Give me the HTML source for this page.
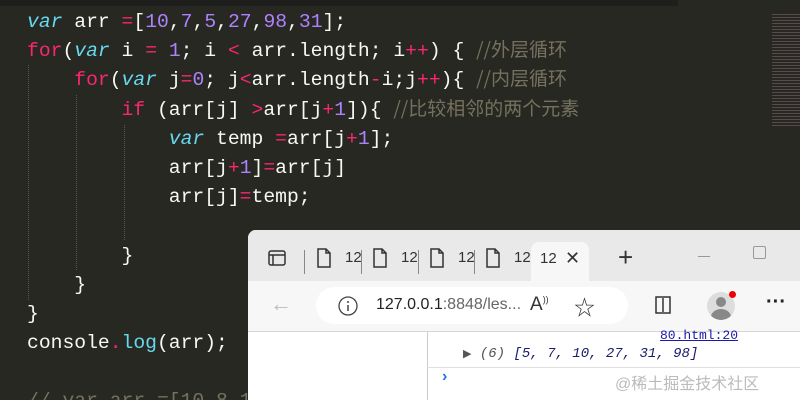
<!DOCTYPE html>
<html style="height:400px;overflow:hidden"><head><style>
body{margin:0;width:800px;height:400px;overflow:hidden;background:#272822;position:relative;font-family:"Liberation Mono","Noto Sans CJK SC",monospace}
.top{position:absolute;left:0;top:0;width:678px;height:6px;background:#1e1f1c}
.code{position:absolute;left:27px;top:8px;font-size:19.7px;color:#f8f8f2;white-space:pre}
.code div{height:29.2px;line-height:29.2px;overflow:visible}
.k{color:#f92672}.v{color:#66d9ef;font-style:italic}.n{color:#ae81ff}.c{color:#75715e;font-family:"Noto Sans CJK SC","Liberation Mono",monospace;font-size:19px;line-height:0}.f{color:#66d9ef}
.g{position:absolute;border-left:1px dotted #555;width:0}
.mini{position:absolute;left:772px;top:12px;width:28px;height:115px;opacity:.5;background:repeating-linear-gradient(#272822 0 2px,#8a6a7a 2px 3px)}
.win{position:absolute;left:248px;top:230px;width:560px;height:170px;background:#fff;border-radius:8px 0 0 0;overflow:hidden;font-family:"Liberation Sans","Noto Sans CJK SC",sans-serif}
.tabs{height:51px;background:#e9e9e9;position:relative}
.tab{position:absolute;top:14px;font-size:15px;color:#333}
.act{position:absolute;left:283px;top:12px;width:58px;height:39px;background:#f7f7f7;border-radius:8px 8px 0 0}
.tb{height:50px;background:#f7f7f7;position:relative;border-bottom:1px solid #d5d5d5}
.url{position:absolute;left:68px;top:6px;width:312px;height:37px;background:#fff;border-radius:19px}
.dev{position:absolute;left:179px;top:102px;width:1px;height:80px;background:#ccc}
</style></head><body>
<div class="top"></div>
<div class="g" style="left:28px;top:65px;height:235px"></div>
<div class="g" style="left:76px;top:95px;height:175px"></div>
<div class="g" style="left:124px;top:125px;height:115px"></div>
<div class="code"><div><span class="v">var</span> arr <span class="k">=</span>[<span class="n">10</span>,<span class="n">7</span>,<span class="n">5</span>,<span class="n">27</span>,<span class="n">98</span>,<span class="n">31</span>];</div><div><span class="k">for</span>(<span class="v">var</span> i <span class="k">=</span> <span class="n">1</span>; i <span class="k">&lt;</span> arr.length; i<span class="k">++</span>) { <span class="c">//外层循环</span></div><div>    <span class="k">for</span>(<span class="v">var</span> j<span class="k">=</span><span class="n">0</span>; j<span class="k">&lt;</span>arr.length<span class="k">-</span>i;j<span class="k">++</span>){ <span class="c">//内层循环</span></div><div>        <span class="k">if</span> (arr[j] <span class="k">&gt;</span>arr[j<span class="k">+</span><span class="n">1</span>]){ <span class="c">//比较相邻的两个元素</span></div><div>            <span class="v">var</span> temp <span class="k">=</span>arr[j<span class="k">+</span><span class="n">1</span>];</div><div>            arr[j<span class="k">+</span><span class="n">1</span>]<span class="k">=</span>arr[j]</div><div>            arr[j]<span class="k">=</span>temp;</div><div> </div><div>        }</div><div>    }</div><div>}</div><div>console<span class="k">.</span><span class="f">log</span>(arr);</div><div> </div><div><span style="color:#75715e">// var arr =[10,8,1</span></div></div>
<div class="mini"></div>
<div class="win">
 <div class="tabs">
  <svg style="position:absolute;left:20px;top:20px" width="18" height="16"><rect x="1" y="1" width="16" height="14" rx="2" fill="none" stroke="#333" stroke-width="1.5"/><line x1="1" y1="5" x2="17" y2="5" stroke="#333" stroke-width="1.5"/><line x1="5" y1="5" x2="5" y2="15" stroke="#333" stroke-width="1.5"/></svg>
  <div style="position:absolute;left:56px;top:20px;width:1px;height:24px;background:#888"></div>
  <svg style="position:absolute;left:68px;top:18px" width="16" height="20"><path d="M2 1h8l4 4v14H2z M10 1v4h4" fill="none" stroke="#333" stroke-width="1.5"/></svg><span class="tab" style="left:97px;top:19px">12</span>
  <div style="position:absolute;left:113px;top:20px;width:1px;height:24px;background:#888"></div>
  <svg style="position:absolute;left:124px;top:18px" width="16" height="20"><path d="M2 1h8l4 4v14H2z M10 1v4h4" fill="none" stroke="#333" stroke-width="1.5"/></svg><span class="tab" style="left:153px;top:19px">12</span>
  <div style="position:absolute;left:170px;top:20px;width:1px;height:24px;background:#888"></div>
  <svg style="position:absolute;left:181px;top:18px" width="16" height="20"><path d="M2 1h8l4 4v14H2z M10 1v4h4" fill="none" stroke="#333" stroke-width="1.5"/></svg><span class="tab" style="left:210px;top:19px">12</span>
  <div style="position:absolute;left:226px;top:20px;width:1px;height:24px;background:#888"></div>
  <svg style="position:absolute;left:237px;top:18px" width="16" height="20"><path d="M2 1h8l4 4v14H2z M10 1v4h4" fill="none" stroke="#333" stroke-width="1.5"/></svg><span class="tab" style="left:266px;top:19px">12</span>
  <div class="act"><span class="tab" style="left:9px;top:8px">12</span><span class="tab" style="left:34px;top:6px;font-size:18px">✕</span></div>
  <span class="tab" style="left:370px;top:12px;font-size:26px;font-weight:300">+</span>
  <div style="position:absolute;left:450px;top:26px;width:12px;height:1px;background:#999"></div>
  <div style="position:absolute;left:505px;top:16px;width:11px;height:11px;border:1px solid #999;border-radius:2px"></div>
 </div>
 <div class="tb">
  <span style="position:absolute;left:22px;top:10px;font-size:22px;color:#bbb">←</span>
  <div class="url">
   <svg style="position:absolute;left:22px;top:9px" width="20" height="20"><circle cx="10" cy="10" r="9" fill="none" stroke="#444" stroke-width="1.3"/><line x1="10" y1="9" x2="10" y2="15" stroke="#444" stroke-width="1.5"/><circle cx="10" cy="6" r="1" fill="#444"/></svg>
   <span style="position:absolute;left:60px;top:9px;font-size:16px;color:#222">127.0.0.1<span style="color:#666">:8848/les...</span></span>
   <span style="position:absolute;left:214px;top:7px;font-size:19px;color:#333">A<sup style="font-size:9px">))</sup></span>
   <span style="position:absolute;left:258px;top:5px;font-size:21px;color:#333">☆</span>
  </div>
  <svg style="position:absolute;left:405px;top:15px" width="20" height="18"><path d="M9 1H3v16h6M11 1h6v16h-6M10 0v18" fill="none" stroke="#333" stroke-width="1.5"/></svg>
  <div style="position:absolute;left:459px;top:11px;width:28px;height:28px;border-radius:50%;background:#ddd;overflow:hidden"><div style="position:absolute;left:9px;top:5px;width:10px;height:10px;border-radius:50%;background:#888"></div><div style="position:absolute;left:4px;top:17px;width:20px;height:16px;border-radius:50%;background:#888"></div></div>
  <div style="position:absolute;left:481px;top:10px;width:7px;height:7px;border-radius:50%;background:#e00"></div>
  <span style="position:absolute;left:518px;top:10px;font-size:20px;color:#222;font-weight:bold">···</span>
 </div>
 <div class="dev"></div>
 <span style="position:absolute;top:98px;font-size:13px;font-family:'Liberation Mono';color:#1a1aa6;text-decoration:underline;left:412px">80.html:20</span>
 <span style="position:absolute;left:215px;top:116px;font-size:14px;font-family:'Liberation Mono';font-style:italic;color:#1a1a6e"><span style="font-style:normal;color:#555;font-size:11px">▶</span> <span style="color:#555">(6)</span> [5, 7, 10, 27, 31, 98]</span>
 <div style="position:absolute;left:179px;top:137px;width:390px;height:1px;background:#e0e0e0"></div>
 <span style="position:absolute;left:194px;top:138px;font-size:16px;color:#1a73e8;font-weight:bold">›</span>
 <span style="position:absolute;left:367px;top:140px;font-size:16px;color:#bbb">@稀土掘金技术社区</span>
</div>
</body></html>
